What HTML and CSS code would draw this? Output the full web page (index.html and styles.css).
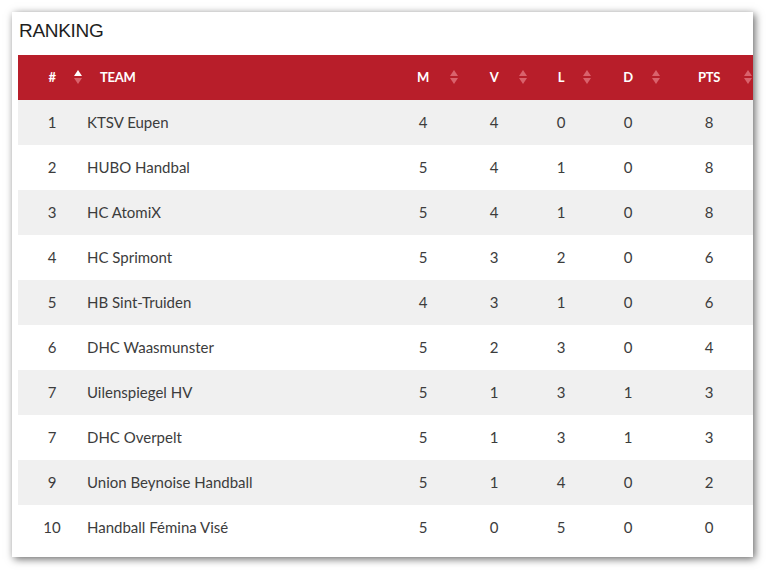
FILE: index.html
```html
<!DOCTYPE html>
<html lang="fr">
<head>
<meta charset="utf-8">
<title>Ranking</title>
<link rel="stylesheet" href="styles.css">
</head>
<body>
<section class="card">
  <h2 class="title">RANKING</h2>
  <div class="table-wrap">
    <table class="ranking">
      <colgroup>
        <col class="c-pos"><col class="c-team"><col class="c-m"><col class="c-v"><col class="c-l"><col class="c-d"><col class="c-pts">
      </colgroup>
      <thead>
        <tr>
          <th class="num sorted">#<span class="sort s-pos"><i class="up"></i><i class="down"></i></span></th>
          <th class="team">TEAM</th>
          <th class="num">M<span class="sort s-m"><i class="up"></i><i class="down"></i></span></th>
          <th class="num">V<span class="sort s-v"><i class="up"></i><i class="down"></i></span></th>
          <th class="num">L<span class="sort s-l"><i class="up"></i><i class="down"></i></span></th>
          <th class="num">D<span class="sort s-d"><i class="up"></i><i class="down"></i></span></th>
          <th class="num">PTS<span class="sort s-pts"><i class="up"></i><i class="down"></i></span></th>
        </tr>
      </thead>
      <tbody>
        <tr><td class="num">1</td><td class="team">KTSV Eupen</td><td class="num">4</td><td class="num">4</td><td class="num">0</td><td class="num">0</td><td class="num">8</td></tr>
        <tr><td class="num">2</td><td class="team">HUBO Handbal</td><td class="num">5</td><td class="num">4</td><td class="num">1</td><td class="num">0</td><td class="num">8</td></tr>
        <tr><td class="num">3</td><td class="team">HC AtomiX</td><td class="num">5</td><td class="num">4</td><td class="num">1</td><td class="num">0</td><td class="num">8</td></tr>
        <tr><td class="num">4</td><td class="team">HC Sprimont</td><td class="num">5</td><td class="num">3</td><td class="num">2</td><td class="num">0</td><td class="num">6</td></tr>
        <tr><td class="num">5</td><td class="team">HB Sint-Truiden</td><td class="num">4</td><td class="num">3</td><td class="num">1</td><td class="num">0</td><td class="num">6</td></tr>
        <tr><td class="num">6</td><td class="team">DHC Waasmunster</td><td class="num">5</td><td class="num">2</td><td class="num">3</td><td class="num">0</td><td class="num">4</td></tr>
        <tr><td class="num">7</td><td class="team">Uilenspiegel HV</td><td class="num">5</td><td class="num">1</td><td class="num">3</td><td class="num">1</td><td class="num">3</td></tr>
        <tr><td class="num">7</td><td class="team">DHC Overpelt</td><td class="num">5</td><td class="num">1</td><td class="num">3</td><td class="num">1</td><td class="num">3</td></tr>
        <tr><td class="num">9</td><td class="team">Union Beynoise Handball</td><td class="num">5</td><td class="num">1</td><td class="num">4</td><td class="num">0</td><td class="num">2</td></tr>
        <tr><td class="num">10</td><td class="team">Handball Fémina Visé</td><td class="num">5</td><td class="num">0</td><td class="num">5</td><td class="num">0</td><td class="num">0</td></tr>
      </tbody>
    </table>
  </div>
</section>
</body>
</html>
```
FILE: styles.css
```css
* { box-sizing: border-box; }
html, body { margin: 0; padding: 0; background: #ffffff; }
body { padding: 12px 0 13px 12px; min-height: 570px; }

.card {
  width: 741px;
  height: 545px;
  background: #ffffff;
  padding: 0 0 0 6px;
  overflow: hidden;
  box-shadow: 2px 2px 8px rgba(0, 0, 0, 0.6);
}

.title {
  margin: 0;
  height: 43px;
  padding: 7px 0 0 1px;
  font-family: "Liberation Sans", Arial, sans-serif;
  font-weight: normal;
  font-size: 19px;
  line-height: 24px;
  letter-spacing: -0.3px;
  color: #1e1e1e;
}

.table-wrap { width: 740px; }

.ranking {
  width: 740px;
  border-collapse: collapse;
  table-layout: fixed;
  font-family: Lato, "Open Sans", sans-serif;
}

.c-pos { width: 68px; }
.c-team { width: 298px; }
.c-m { width: 78px; }
.c-v { width: 64px; }
.c-l { width: 70px; }
.c-d { width: 64px; }
.c-pts { width: 98px; }

.ranking thead tr { background: #b81e2a; }
.ranking th {
  position: relative;
  height: 45px;
  padding: 0 0 2px;
  color: #ffffff;
  font-size: 13px;
  font-weight: 700;
  letter-spacing: -0.3px;
}
.ranking th.num { text-align: center; }
.ranking th.team { text-align: left; padding-left: 14px; }

.sort {
  position: absolute;
  left: 50%;
  top: 15px;
  width: 9px;
  height: 14px;
  display: flex;
  flex-direction: column;
  justify-content: space-between;
  align-items: center;
}
.s-pos { margin-left: 21px; }
.s-m { margin-left: 26.5px; }
.s-v { margin-left: 24.5px; }
.s-l { margin-left: 21.5px; }
.s-d { margin-left: 23.5px; }
.s-pts { margin-left: 34.5px; }

.sort i {
  display: block;
  width: 0;
  height: 0;
  border-left: 4.5px solid transparent;
  border-right: 4.5px solid transparent;
}
.sort .up { border-bottom: 6.5px solid #d9626c; }
.sort .down { border-top: 6.5px solid #d9626c; }
.sorted .sort .up { border-bottom-color: #ffffff; }

.ranking td {
  height: 45px;
  padding: 0 0 1px;
  font-size: 15px;
  color: #3c3c3c;
}
.ranking td.num { text-align: center; }
.ranking td.team { padding-left: 1px; }
.ranking tbody tr:nth-child(odd) { background: #f0f0f0; }
.ranking tbody tr:nth-child(even) { background: #ffffff; }
```
